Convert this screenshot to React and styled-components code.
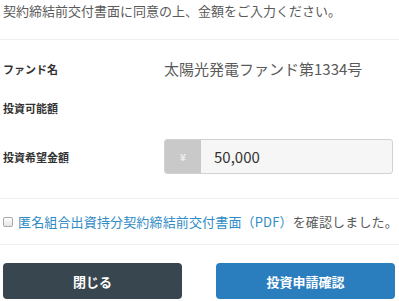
import styled, { createGlobalStyle } from 'styled-components';

const GlobalStyle = createGlobalStyle`
  html, body {
    margin: 0;
    padding: 0;
    background: #fff;
  }
  body {
    font-family: "Noto Sans CJK JP", "Noto Sans", sans-serif;
    color: #555;
  }
`;

const Wrapper = styled.div`
  width: 399px;
  height: 301px;
  overflow: hidden;
  box-sizing: border-box;
`;

const Lead = styled.p`
  margin: 0;
  padding: 3px 3px 0;
  height: 36px;
  font-size: 13px;
  line-height: 16px;
  color: #5a5a5a;
`;

const Divider = styled.hr`
  margin: 0;
  border: 0;
  border-top: 1px solid #efefef;
`;

const Row = styled.div`
  display: grid;
  grid-template-columns: 161px 1fr;
  align-items: center;
  height: ${(p) => p.$height}px;
  padding: 0 6px 0 3px;
  padding-top: ${(p) => p.$top || 0}px;
  padding-bottom: ${(p) => p.$bottom || 0}px;
`;

const Label = styled.span`
  font-size: 11px;
  font-weight: 700;
  color: #333;
  line-height: 14px;
`;

const FundName = styled.span`
  font-size: 15px;
  line-height: 18px;
  color: #5a5a5a;
`;

const InputGroup = styled.div`
  display: flex;
  height: 35px;
  box-sizing: border-box;
  border: 1px solid #d2d2d2;
  border-radius: 3px;
  overflow: hidden;
  background: #f6f6f6;
`;

const Addon = styled.span`
  width: 36px;
  display: flex;
  align-items: center;
  justify-content: center;
  background: #c9c9c9;
  color: #eee;
  font-size: 10px;
  font-weight: 700;
`;

const AmountInput = styled.input`
  flex: 1;
  min-width: 0;
  border: 0;
  outline: 0;
  background: transparent;
  padding: 0 0 0 13px;
  font-family: "Noto Sans CJK JP", "Noto Sans", sans-serif;
  font-size: 15px;
  color: #333;
`;

const AgreeRow = styled.label`
  display: flex;
  align-items: center;
  height: 45px;
  padding: 0 0 0 3px;
  font-size: 13px;
  letter-spacing: 0.15px;
  color: #5a5a5a;
  white-space: nowrap;
`;

const Check = styled.input`
  appearance: none;
  flex-shrink: 0;
  width: 10px;
  height: 10px;
  margin: 0 5px 0 0;
  border: 1px solid #aaa;
  border-radius: 2px;
  background: linear-gradient(#fff, #e4e4e4);
`;

const DocLink = styled.a`
  color: #2f8bc6;
  text-decoration: none;
`;

const Actions = styled.div`
  display: flex;
  justify-content: space-between;
  padding: 18px 4px 0 3px;
`;

const Button = styled.button`
  width: ${(p) => p.$width}px;
  height: 36px;
  border: 0;
  border-radius: 4px;
  background: ${(p) => (p.$primary ? '#2a7ebd' : '#37464f')};
  color: #fff;
  font-family: "Noto Sans CJK JP", "Noto Sans", sans-serif;
  font-size: 13px;
  font-weight: 700;
  cursor: pointer;
`;

export default function App() {
  return (
    <Wrapper>
      <GlobalStyle />
      <Lead>契約締結前交付書面に同意の上、金額をご入力ください。</Lead>
      <Divider />
      <Row $height={58}>
        <Label>ファンド名</Label>
        <FundName>太陽光発電ファンド第1334号</FundName>
      </Row>
      <Row $height={20}>
        <Label>投資可能額</Label>
        <span />
      </Row>
      <Row $height={35} $top={21} $bottom={24}>
        <Label>投資希望金額</Label>
        <InputGroup>
          <Addon>¥</Addon>
          <AmountInput defaultValue="50,000" />
        </InputGroup>
      </Row>
      <Divider />
      <AgreeRow>
        <Check type="checkbox" />
        <DocLink href="#">匿名組合出資持分契約締結前交付書面（PDF）</DocLink>
        を確認しました。
      </AgreeRow>
      <Divider />
      <Actions>
        <Button $width={179}>閉じる</Button>
        <Button $width={179} $primary>
          投資申請確認
        </Button>
      </Actions>
    </Wrapper>
  );
}
